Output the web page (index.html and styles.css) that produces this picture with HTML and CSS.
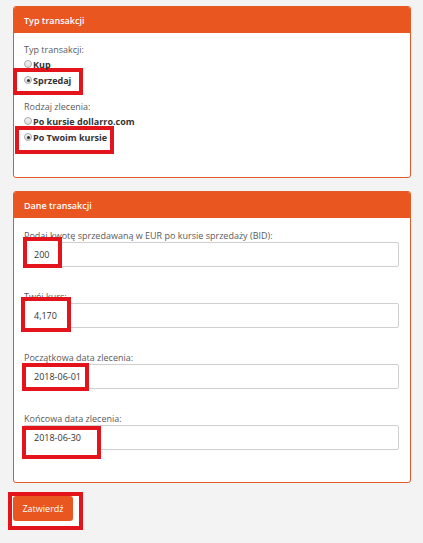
FILE: index.html
```html
<!DOCTYPE html>
<html lang="pl">
<head>
<meta charset="utf-8">
<title>Transakcja</title>
<link rel="stylesheet" href="styles.css">
</head>
<body>
<div class="page">
  <section class="panel">
    <div class="panel-head">Typ transakcji</div>
    <div class="panel-body body-first">
      <div class="group">
        <div class="label">Typ transakcji:</div>
        <div class="radio"><span class="dot"></span>Kup</div>
        <div class="radio"><span class="dot on"></span>Sprzedaj</div>
      </div>
      <div class="group">
        <div class="label">Rodzaj zlecenia:</div>
        <div class="radio"><span class="dot"></span>Po kursie dollarro.com</div>
        <div class="radio"><span class="dot on"></span>Po Twoim kursie</div>
      </div>
    </div>
  </section>

  <section class="panel">
    <div class="panel-head">Dane transakcji</div>
    <div class="panel-body">
      <div class="field">
        <div class="label">Podaj kwotę sprzedawaną w EUR po kursie sprzedaży (BID):</div>
        <div class="input"><span class="value">200</span></div>
      </div>
      <div class="field">
        <div class="label">Twój kurs:</div>
        <div class="input"><span class="value">4,170</span></div>
      </div>
      <div class="field">
        <div class="label">Początkowa data zlecenia:</div>
        <div class="input"><span class="value">2018-06-01</span></div>
      </div>
      <div class="field">
        <div class="label">Końcowa data zlecenia:</div>
        <div class="input"><span class="value">2018-06-30</span></div>
      </div>
    </div>
  </section>

  <button class="submit">Zatwierdź</button>

  <div class="mark m1"></div>
  <div class="mark m2"></div>
  <div class="mark m3"></div>
  <div class="mark m4"></div>
  <div class="mark m5"></div>
  <div class="mark m6"></div>
  <div class="mark m7"></div>
</div>
</body>
</html>
```

FILE: styles.css
```css
html, body {
  margin: 0;
  padding: 0;
}
body {
  background: #f3f3f3;
  font-family: "Open Sans", "DejaVu Sans", sans-serif;
  font-size: 9px;
  color: #5a5a5a;
}
.page {
  position: relative;
  padding: 6px 12px 0 13px;
  height: 537px;
}
.panel {
  background: #fff;
  border: 1px solid #e45a27;
  border-radius: 3px;
  margin-bottom: 13px;
  overflow: hidden;
}
.panel-head {
  background: #e9561f;
  color: #fff;
  height: 26px;
  line-height: 27px;
  padding-left: 10px;
  font-weight: 600;
}
.panel-body {
  padding: 11px 11px 9px 9px;
}
.body-first {
  padding-top: 10px;
  padding-bottom: 20px;
}
.label {
  line-height: 13px;
  padding-left: 1px;
}
.group {
  margin-bottom: 12px;
}
.radio {
  position: relative;
  z-index: 2;
  display: flex;
  align-items: center;
  height: 16px;
  font-weight: 700;
  color: #333;
  padding-left: 1px;
}
.dot {
  box-sizing: border-box;
  width: 8px;
  height: 8px;
  border-radius: 50%;
  border: 1px solid #a9a9a9;
  background: linear-gradient(#f4f4f4, #dcdcdc);
  margin-right: 1px;
  position: relative;
}
.dot.on::after {
  content: "";
  position: absolute;
  left: 1.5px;
  top: 1.5px;
  width: 3px;
  height: 3px;
  border-radius: 50%;
  background: #333;
}
.field {
  margin-bottom: 23px;
}
.field:last-child {
  margin-bottom: 23px;
}
.input {
  box-sizing: border-box;
  height: 25px;
  border: 1px solid #cfcfcf;
  border-radius: 2px;
  padding: 0 10px;
  display: flex;
  align-items: center;
  color: #333;
}
.value {
  position: relative;
  z-index: 2;
}
.submit {
  position: relative;
  z-index: 2;
  display: block;
  box-sizing: border-box;
  width: 60px;
  height: 25px;
  margin-top: 1px;
  border: 0;
  border-radius: 3px;
  background: #e9561f;
  color: #fff;
  font-family: "Open Sans", "DejaVu Sans", sans-serif;
  font-size: 9px;
  padding: 0;
}
.mark {
  position: absolute;
  z-index: 1;
  box-sizing: border-box;
  border: 4px solid #e3141c;
  background: #fff;
}
.m1 { left: 13px; top: 68px; width: 70px; height: 27px; }
.m2 { left: 15px; top: 126px; width: 99px; height: 28px; }
.m3 { left: 23px; top: 237px; width: 39px; height: 31px; }
.m4 { left: 21px; top: 297px; width: 50px; height: 35px; }
.m5 { left: 22px; top: 363px; width: 67px; height: 28px; }
.m6 { left: 22px; top: 426px; width: 79px; height: 33px; }
.m7 { left: 8px; top: 492px; width: 75px; height: 38px; }
```
